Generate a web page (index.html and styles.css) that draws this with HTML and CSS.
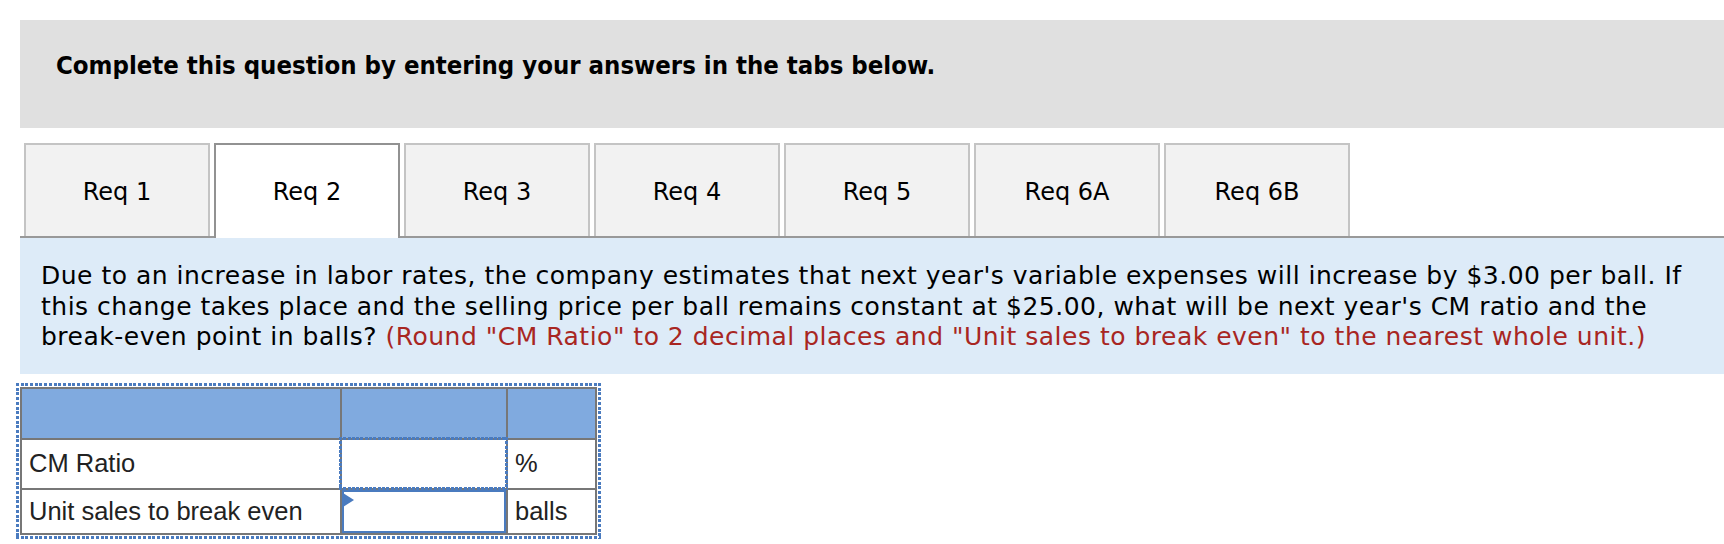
FILE: index.html
```html
<!DOCTYPE html>
<html lang="en">
<head>
<meta charset="utf-8">
<title>Req 2</title>
<link rel="stylesheet" href="styles.css">
</head>
<body>
<div class="page">
  <div class="banner">
    <h2 class="banner-title">Complete this question by entering your answers in the tabs below.</h2>
  </div>

  <div class="tabs">
    <div class="tab">Req 1</div>
    <div class="tab tab-active">Req 2</div>
    <div class="tab">Req 3</div>
    <div class="tab">Req 4</div>
    <div class="tab">Req 5</div>
    <div class="tab">Req 6A</div>
    <div class="tab">Req 6B</div>
  </div>

  <div class="question">
    <p class="question-text">Due to an increase in labor rates, the company estimates that next year's variable expenses will increase by $3.00 per ball. If<br>this change takes place and the selling price per ball remains constant at $25.00, what will be next year's CM ratio and the<br>break-even point in balls? <span class="hint">(Round "CM Ratio" to 2 decimal places and "Unit sales to break even" to the nearest whole unit.)</span></p>
  </div>

  <div class="answer-wrap">
    <div class="answer-grid">
      <div class="cell head"></div>
      <div class="cell head"></div>
      <div class="cell head"></div>

      <div class="cell label">CM Ratio</div>
      <div class="cell entry entry-pending"></div>
      <div class="cell label">%</div>

      <div class="cell label">Unit sales to break even</div>
      <div class="cell entry"><div class="entry-box"><span class="entry-flag"></span></div></div>
      <div class="cell label">balls</div>
    </div>
  </div>
</div>
</body>
</html>
```

FILE: styles.css
```css
html, body {
  margin: 0;
  padding: 0;
  background: #ffffff;
}

.page {
  padding: 20px 0 0 20px;
  font-family: "DejaVu Sans", Verdana, sans-serif;
  color: #000;
}

.banner {
  background: #e0e0e0;
  height: 108px;
  box-sizing: border-box;
  padding: 30px 0 0 36px;
}

.banner-title {
  margin: 0;
  font-size: 25.5px;
  line-height: 30px;
  font-weight: bold;
  font-stretch: condensed;
}

.tabs {
  margin-top: 15px;
  display: flex;
  gap: 4px;
  padding-left: 4px;
  border-bottom: 2px solid #999999;
  height: 93px;
}

.tab {
  width: 186px;
  height: 93px;
  box-sizing: border-box;
  border: 2px solid #c4c4c4;
  border-bottom: none;
  background: #f2f2f2;
  display: flex;
  align-items: center;
  justify-content: center;
  font-size: 24px;
  padding-top: 3px;
}

.tab-active {
  height: 95px;
  padding-bottom: 2px;
  background: #ffffff;
  border-color: #929292;
  position: relative;
  z-index: 1;
}

.question {
  background: #ddebf8;
  padding: 23px 21px 21px 21px;
}

.question-text {
  margin: 0;
  font-size: 25px;
  letter-spacing: 0.5px;
  line-height: 30.5px;
  white-space: nowrap;
}

.hint {
  color: #a82622;
}

.answer-wrap {
  margin: 9px 0 0 -4px;
  width: 577px;
  padding: 4px;
  background:
    repeating-linear-gradient(90deg, #4a7bbf 0 3px, transparent 3px 4.7px) left top / 100% 3px no-repeat,
    repeating-linear-gradient(90deg, #4a7bbf 0 3px, transparent 3px 4.7px) left bottom / 100% 3px no-repeat,
    repeating-linear-gradient(180deg, #4a7bbf 0 3px, transparent 3px 4.7px) left top / 3px 100% no-repeat,
    repeating-linear-gradient(180deg, #4a7bbf 0 3px, transparent 3px 4.7px) right top / 3px 100% no-repeat;
}

.answer-grid {
  display: grid;
  grid-template-columns: 318px 164px 87px;
  grid-template-rows: 49px 48px 43px;
  gap: 2px;
  padding: 2px;
  background: #777777;
  font-family: "Liberation Sans", Arial, sans-serif;
  font-size: 25.5px;
  color: #222222;
}

.cell {
  background: #ffffff;
  position: relative;
}

.cell.head {
  background: #80aadf;
}

.label {
  display: flex;
  align-items: center;
  padding-left: 7px;
  white-space: nowrap;
}

.entry-pending::after {
  content: "";
  position: absolute;
  top: -3px;
  left: -3px;
  right: -2px;
  bottom: -2px;
  background:
    repeating-linear-gradient(90deg, #4a7bbf 0 3px, transparent 3px 4.3px) left top / 100% 3px no-repeat,
    repeating-linear-gradient(90deg, #4a7bbf 0 3px, transparent 3px 4.3px) left bottom / 100% 3px no-repeat,
    repeating-linear-gradient(180deg, #4a7bbf 0 3px, transparent 3px 4.3px) left top / 3px 100% no-repeat,
    repeating-linear-gradient(180deg, #4a7bbf 0 3px, transparent 3px 4.3px) right top / 3px 100% no-repeat;
}

.entry-box {
  position: relative;
  height: 100%;
  box-sizing: border-box;
  border: 2px solid #4a7bbf;
}

.entry-flag {
  position: absolute;
  left: -1px;
  top: 1px;
  width: 0;
  height: 0;
  border-left: 11px solid #4a7bbf;
  border-top: 7px solid transparent;
  border-bottom: 7px solid transparent;
}
```
